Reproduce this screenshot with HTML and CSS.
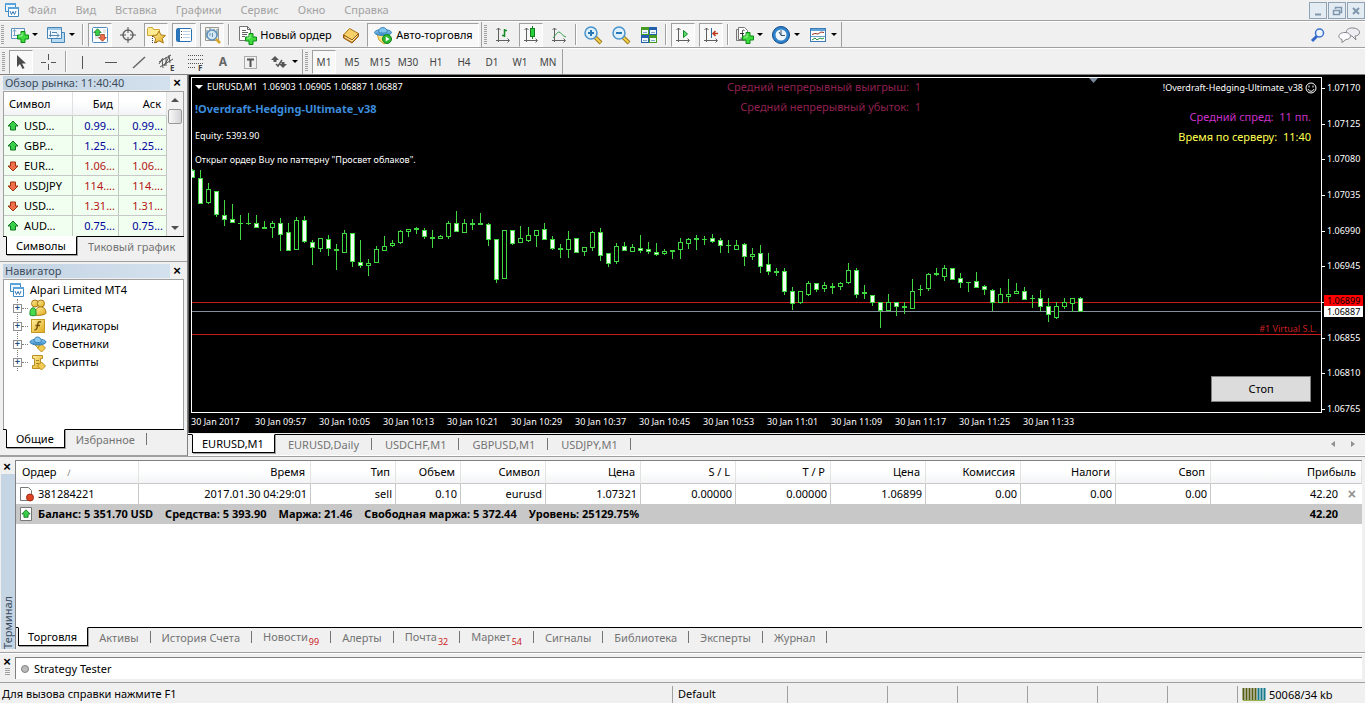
FILE: index.html
```html
<!DOCTYPE html>
<html lang="ru">
<head>
<meta charset="utf-8">
<title>EURUSD,M1</title>
<link rel="stylesheet" href="styles.css">
</head>
<body>
<svg class="defs" aria-hidden="true">
  <defs>
    <linearGradient id="gold" x1="0" y1="0" x2="1" y2="1"><stop offset="0" stop-color="#fff0a0"/><stop offset="1" stop-color="#dfa91c"/></linearGradient>
    <linearGradient id="sky" x1="0" y1="0" x2="0" y2="1"><stop offset="0" stop-color="#9fd2f5"/><stop offset="1" stop-color="#2f86c6"/></linearGradient>
    <symbol id="windows" viewBox="0 0 16 16"><path d="M1.500 1.500h10v8h-10z" fill="#eaf6ff" stroke="#3f8ac4"/><path d="M1 1h11v2H1z" fill="#5ba3d8"/><path d="M4.500 5.500h10v9h-10z" fill="#fff" stroke="#3f8ac4"/><path d="M4 5h11v2H4z" fill="#5ba3d8"/><path d="M6 9l1.500 3.500L9 9.500l1.500 3L12 9" fill="none" stroke="#3278b4"/></symbol>
    <symbol id="plus" viewBox="0 0 12 12"><path d="M4 .5h4V4h3.500v4H8v3.500H4V8H.5V4H4z" fill="#3edb3e" stroke="#0c8a14"/><path d="M5 2v3H2" fill="none" stroke="#a5f7a0"/></symbol>
    <symbol id="up" viewBox="0 0 12 12"><path d="M6 1l5 5H8.500v4h-5V6H1z" fill="#39cf49" stroke="#137422"/></symbol>
    <symbol id="down" viewBox="0 0 12 12"><path d="M6 11l5-5H8.500V2h-5v4H1z" fill="#f0704a" stroke="#9c3110"/></symbol>
    <symbol id="axes" viewBox="0 0 20 20"><path d="M5.500 3v14M3 15.500h13M3.500 5l2-2 2 2M14.500 13.500l2 2-2 2" fill="none" stroke="#606060"/></symbol>
    <symbol id="hat" viewBox="0 0 18 18"><path d="M12.500 9l4 4-4 4-4-4z" fill="#f2cb50" stroke="#b98f24"/><path d="M5 9h6l-2 4z" fill="#f5d765" stroke="#c0921b"/><ellipse cx="9" cy="7" rx="8" ry="3" fill="url(#sky)" stroke="#3a85ba"/><path d="M5 6.500c0-6 7-6 7.500 0-2 1.500-5 1.500-7.500 0z" fill="#8bc8ef" stroke="#3a85ba"/></symbol>
  </defs>
</svg>

<header class="menubar">
  <svg class="app-icon"><use href="#windows"/></svg>
  <nav class="menu">
    <button>Файл</button><button>Вид</button><button>Вставка</button><button>Графики</button><button>Сервис</button><button>Окно</button><button>Справка</button>
  </nav>
  <div class="window-buttons">
    <button aria-label="Свернуть"><svg viewBox="0 0 16 16"><path d="M5 11.500h6" stroke="#7f97ad" stroke-width="2"/></svg></button>
    <button aria-label="Восстановить"><svg viewBox="0 0 16 16"><path d="M6.500 6V4.500h6v5H11M4.500 7.500h6v4h-6zM4 7.500h7" fill="none" stroke="#7f97ad" stroke-width="1.500"/></svg></button>
    <button aria-label="Закрыть"><svg viewBox="0 0 16 16"><path d="M5 5l6 6M11 5l-6 6" stroke="#7f97ad" stroke-width="2"/></svg></button>
  </div>
</header>

<div class="toolbar first">
  <div class="group">
    <i class="grip"></i>
    <button class="tool split" aria-label="Новый график"><svg viewBox="0 0 20 20"><path d="M2.500 3.500h13v10h-13z" fill="#f4faff" stroke="#5b94bf"/><path d="M5.500 5v6M4 6.500l1.500-2L7 6.500M4 10.500h5" fill="none" stroke="#7ba0bd"/><use href="#plus" x="8" y="6" width="12" height="12"/></svg><i class="caret"></i></button>
    <button class="tool split" aria-label="Профили"><svg viewBox="0 0 20 20"><path d="M5.500 7.500h13v10h-13z" fill="#b8daf2" stroke="#4684b5"/><path d="M1.500 2.500h14v11h-14z" fill="#eef7ff" stroke="#4684b5"/><path d="M2 3h13v2H2z" fill="#9cc9ea"/><path d="M4.500 6v6M3 10.500h10M11 8.500l2 2-2 2M6 7.500h5" fill="none" stroke="#5787ac"/></svg><i class="caret"></i></button>
    <i class="sep"></i>
    <button class="tool on" aria-label="Обзор рынка"><svg viewBox="0 0 20 20"><rect x="2.500" y="2.500" width="15" height="15" rx="1" fill="#fff" stroke="#4b8cc4"/><path d="M5 11h4M5 13h4M13 5h3M13 7h3" stroke="#ccc"/><use href="#up" x="3" y="3" width="9" height="9"/><use href="#down" x="8" y="8" width="9" height="9"/></svg></button>
    <button class="tool" aria-label="Окно данных"><svg viewBox="0 0 20 20"><circle cx="10" cy="10" r="5" fill="none" stroke="#686868" stroke-width="1.500"/><path d="M10 2v6M10 12v6M2 10h6M12 10h6" stroke="#555"/></svg></button>
    <button class="tool on" aria-label="Навигатор"><svg viewBox="0 0 20 20"><path d="M1.500 3.500l1-1h4l1 2h6v6h-12z" fill="#ffec94" stroke="#d2a632"/><path d="M6.500 11v8M8 17.500h3" stroke="#444" stroke-dasharray="1 1"/><path d="M13 6l2 4 4.500.5-3.200 3 1 4.500L13 15.800 8.800 18l.9-4.500-3.200-3L11 10z" fill="url(#gold)" stroke="#ad7b14"/></svg></button>
    <button class="tool on" aria-label="Терминал"><svg viewBox="0 0 20 20"><rect x="2.500" y="3.500" width="15" height="13" rx="1" fill="#fff" stroke="#2670b5"/><path d="M3 4h3v12H3z" fill="#2b75bb"/><path d="M7.500 6v1M7.500 9v1M7.500 12v1" stroke="#444"/><path d="M9 6.500h7M9 9.500h7M9 12.500h7" stroke="#bcd1e5"/></svg></button>
    <button class="tool on" aria-label="Тестер стратегий"><svg viewBox="0 0 20 20"><path d="M3.500 2.500h13v13h-13z" fill="#f0f0ea" stroke="#9a9a90"/><path d="M5 5v8M8 3v4M12 4v4M15 4v7" stroke="#5f86a8"/><circle cx="10" cy="10" r="5" fill="#cfe6f8" fill-opacity=".85" stroke="#5e8fb8" stroke-width="1.500"/><path d="M8 11V8M10.500 12V8" stroke="#6e94b4"/><path d="M14 14l4 4" stroke="#d9a62c" stroke-width="2.500"/></svg></button>
    <i class="sep"></i>
    <button class="tool order"><svg viewBox="0 0 20 20"><path d="M2.500 1.500h8l3 3v11h-11z" fill="#fff" stroke="#777"/><path d="M10.500 1.500v3h3M5 5.500h4M5 7.500h6M5 9.500h5M5 11.500h3" fill="none" stroke="#666"/><use href="#plus" x="8" y="8" width="12" height="12"/></svg>Новый ордер</button>
    <button class="tool" aria-label="MetaEditor"><svg viewBox="0 0 20 20"><path d="M2.500 10l6-6.500 9 5-6.500 6.500z" fill="#f7d068" stroke="#a96f18"/><path d="M2.500 10v3l8.500 5 6.500-6.500v-3L11 15z" fill="#d89228" stroke="#915a12"/><path d="M4 12l7 4 5.500-5.500" fill="none" stroke="#fff0c0"/></svg></button>
    <button class="tool auto on"><svg viewBox="0 0 20 20"><path d="M4 9h11l2 5-6 5-5-4z" fill="#f9e07b" stroke="#caa02b"/><ellipse cx="10" cy="7.500" rx="8.500" ry="3" fill="url(#sky)" stroke="#3a85ba"/><path d="M5.500 7c0-6 8.500-6 9 0-2.500 1.500-6.500 1.500-9 0z" fill="#80c5ee" stroke="#3a85ba"/><circle cx="14" cy="14" r="4.500" fill="#2db92f" stroke="#12851a"/><path d="M12.800 11.500v5l3.700-2.500z" fill="#fff"/></svg>Авто-торговля</button>
  </div>
  <div class="group">
    <i class="grip"></i>
    <button class="tool" aria-label="Бары"><svg viewBox="0 0 20 20"><use href="#axes" width="20" height="20"/><path d="M11.500 4v8M9 10.500h2M12 5.500h2" stroke="#158a24" stroke-width="1.500"/></svg></button>
    <button class="tool on" aria-label="Свечи"><svg viewBox="0 0 20 20"><use href="#axes" width="20" height="20"/><path d="M11.500 1v13" stroke="#157d20"/><rect x="9.500" y="3.500" width="4" height="8" fill="#27cf3b" stroke="#157d20"/></svg></button>
    <button class="tool" aria-label="Линия"><svg viewBox="0 0 20 20"><use href="#axes" width="20" height="20"/><path d="M4 13c2-2 4-6 6-6s3 4 7 5" fill="none" stroke="#2e9a46"/></svg></button>
    <i class="sep"></i>
    <button class="tool" aria-label="Увеличить"><svg viewBox="0 0 20 20"><path d="M12 12l6 6" stroke="#9c7a1c" stroke-width="4"/><path d="M12 12l5.500 5.500" stroke="#f4d04c" stroke-width="2"/><circle cx="8" cy="8" r="6" fill="#dff0fd" stroke="#4a93cc" stroke-width="1.500"/><path d="M5 8h6M8 5v6" stroke="#2878b5" stroke-width="2"/></svg></button>
    <button class="tool" aria-label="Уменьшить"><svg viewBox="0 0 20 20"><path d="M12 12l6 6" stroke="#9c7a1c" stroke-width="4"/><path d="M12 12l5.500 5.500" stroke="#f4d04c" stroke-width="2"/><circle cx="8" cy="8" r="6" fill="#dff0fd" stroke="#4a93cc" stroke-width="1.500"/><path d="M5 8h6" stroke="#2878b5" stroke-width="2"/></svg></button>
    <button class="tool" aria-label="Окна плиткой"><svg viewBox="0 0 20 20"><path d="M2 2h8v8H2zM10 10h8v8h-8z" fill="#469b20"/><path d="M10 2h8v8h-8zM2 10h8v8H2z" fill="#245fae"/><path d="M3 5h6v4H3zM11 5h6v4h-6zM3 13h6v4H3zM11 13h6v4h-6z" fill="#eef8ff"/><path d="M4 7.500h4M12 7.500h4M4 15.500h4M12 15.500h4" stroke="#7aa6c8"/></svg></button>
    <i class="sep"></i>
    <button class="tool on" aria-label="Автопрокрутка"><svg viewBox="0 0 20 20"><use href="#axes" width="20" height="20"/><path d="M10.500 5.500v7l4-3.500z" fill="#5ade6a" stroke="#12862a"/></svg></button>
    <button class="tool on" aria-label="Сдвиг графика"><svg viewBox="0 0 20 20"><use href="#axes" width="20" height="20"/><path d="M10.500 3v10" stroke="#2b6d9d"/><path d="M12 8.500h5M14.500 6l-2.500 2.500 2.500 2.500" fill="none" stroke="#bc3a16" stroke-width="1.500"/></svg></button>
    <i class="sep"></i>
    <button class="tool split" aria-label="Индикаторы"><svg viewBox="0 0 20 20"><path d="M2.500 4.500h8v11h-8z" fill="#e9e9e9" stroke="#777"/><path d="M4.500 2.500h6l3 3v9h-9z" fill="#fff" stroke="#777"/><path d="M10.500 5.500c-2-1-2 0-2 2v4c0 2-1 2-2 1.500M6 8.500h4" fill="none" stroke="#333"/><use href="#plus" x="8" y="7" width="12" height="12"/></svg><i class="caret"></i></button>
    <button class="tool split" aria-label="Периоды"><svg viewBox="0 0 20 20"><circle cx="10" cy="10" r="7" fill="#eef6fc" stroke="#2f82cc" stroke-width="3"/><circle cx="10" cy="10" r="8.500" fill="none" stroke="#124d8a"/><path d="M10 5v5.500h4M10 10l-2-3" fill="none" stroke="#35526b"/></svg><i class="caret"></i></button>
    <button class="tool split" aria-label="Шаблоны"><svg viewBox="0 0 20 20"><rect x="2.500" y="3.500" width="15" height="13" fill="#fff" stroke="#3b7cb7"/><path d="M3 4h14v2H3z" fill="#62a3d8"/><path d="M3 11.500h14" stroke="#6ba3cd"/><path d="M4 9.500l3-1 3 .5 3-2 3 .5" fill="none" stroke="#963322"/><path d="M4 15l3-2 2 2 3-2 2 1 2-1" fill="none" stroke="#209038"/></svg><i class="caret"></i></button>
  </div>
  <div class="toolbar-end">
    <button class="tool" aria-label="Поиск"><svg viewBox="0 0 20 20"><path d="M9 11l-5 5" stroke="#3268c7" stroke-width="3"/><circle cx="11.500" cy="8" r="4" fill="#edf5ff" stroke="#3b70cc" stroke-width="1.500"/></svg></button>
    <button class="tool chat" aria-label="Сообщения"><svg viewBox="0 0 24 20"><path d="M15 3c10 0 9 8 3 8l1 4-4-4C8 11 7 3 15 3z" fill="#ededf2" stroke="#85858d"/><path d="M8 7.500c7 0 7 7 1 7l-4 3v-3C0 13 1 7.500 8 7.500z" fill="#fbfbfd" stroke="#85858d"/></svg></button>
  </div>
</div>

<div class="toolbar second">
  <div class="group">
    <i class="grip"></i>
    <button class="tool on" aria-label="Курсор"><svg viewBox="0 0 20 20"><path d="M6 3v12l3-3 2.500 5 2-1-2.500-4.500h4z" fill="#4b4b4b"/></svg></button>
    <button class="tool" aria-label="Перекрестие"><svg viewBox="0 0 20 20"><path d="M9.500 2v6M9.500 12v6M2 10.500h5M12 10.500h5" stroke="#555"/></svg></button>
    <i class="sep"></i>
    <button class="tool" aria-label="Вертикальная линия"><svg viewBox="0 0 20 20"><path d="M9.500 4v13" stroke="#555"/></svg></button>
    <button class="tool" aria-label="Горизонтальная линия"><svg viewBox="0 0 20 20"><path d="M4 10.500h12" stroke="#555"/></svg></button>
    <button class="tool" aria-label="Трендовая линия"><svg viewBox="0 0 20 20"><path d="M4 16L16 5" stroke="#666" stroke-width="1.500"/></svg></button>
    <button class="tool" aria-label="Канал"><svg viewBox="0 0 20 20"><path d="M2 10L14 3M3 15l13-8M5 7l1 9M9 5v9M12 3l1 8M2 12l4-6M7 14l5-9" stroke="#555"/><text class="glyph" x="13" y="19">E</text></svg></button>
    <button class="tool" aria-label="Фибоначчи"><svg viewBox="0 0 20 20"><path d="M3 3.500h15M3 7.500h15M3 11.500h15M3 15.500h8" stroke="#555" stroke-dasharray="1 1"/><text class="glyph" x="13" y="19">F</text></svg></button>
    <button class="tool letter">A</button>
    <button class="tool" aria-label="Метка"><svg viewBox="0 0 20 20"><rect x="3.500" y="4.500" width="12" height="12" fill="none" stroke="#666" stroke-dasharray="1 1"/><path d="M6 7.500h7M9.500 8v7" stroke="#555" stroke-width="2"/></svg></button>
    <button class="tool split" aria-label="Стрелки"><svg viewBox="0 0 20 20"><path d="M6 4l4 4H7.500v2h-3V8H2zM14 16l-4-4h2.500v-2h3v2H18z" fill="#555"/><path d="M7 12l2 2 4-6" fill="none" stroke="#555" stroke-width="1.500"/></svg><i class="caret"></i></button>
  </div>
  <div class="group periods">
    <i class="grip"></i>
    <button class="tool on">M1</button><button class="tool">M5</button><button class="tool">M15</button><button class="tool">M30</button><button class="tool">H1</button><button class="tool">H4</button><button class="tool">D1</button><button class="tool">W1</button><button class="tool">MN</button>
  </div>
</div>

<main class="workspace">
  <aside class="side">
    <section class="panel">
      <header class="panel-title"><h2>Обзор рынка: 11:40:40</h2><button class="close" aria-label="Закрыть">×</button></header>
      <div class="quotes">
        <table>
          <colgroup><col class="q-name"><col class="q-bid"><col></colgroup>
          <thead><tr><th>Символ</th><th>Бид</th><th>Аск</th></tr></thead>
          <tbody>
            <tr class="rise"><td><svg><use href="#up"/></svg>USD...</td><td>0.99...</td><td>0.99...</td></tr>
            <tr class="rise"><td><svg><use href="#up"/></svg>GBP...</td><td>1.25...</td><td>1.25...</td></tr>
            <tr class="fall"><td><svg><use href="#down"/></svg>EUR...</td><td>1.06...</td><td>1.06...</td></tr>
            <tr class="fall"><td><svg><use href="#down"/></svg>USDJPY</td><td>114....</td><td>114....</td></tr>
            <tr class="fall"><td><svg><use href="#down"/></svg>USD...</td><td>1.31...</td><td>1.31...</td></tr>
            <tr class="rise"><td><svg><use href="#up"/></svg>AUD...</td><td>0.75...</td><td>0.75...</td></tr>
          </tbody>
        </table>
        <div class="scrollbar"><i class="arrow-up"></i><i class="thumb"></i><i class="arrow-down"></i></div>
      </div>
      <div class="tabs"><button class="active">Символы</button><button class="last">Тиковый график</button></div>
    </section>
    <section class="panel navigator">
      <header class="panel-title"><h2>Навигатор</h2><button class="close" aria-label="Закрыть">×</button></header>
      <div class="tree">
        <div class="root"><svg><use href="#windows"/></svg>Alpari Limited MT4</div>
        <ul>
          <li><button aria-label="Развернуть">+</button><svg viewBox="0 0 18 18"><circle cx="6" cy="4.500" r="3.500" fill="url(#gold)" stroke="#a87812"/><circle cx="12" cy="4.500" r="3.500" fill="url(#gold)" stroke="#a87812"/><path d="M6 16c-1-10 11-11 11-2 0 2-9 3-11 2z" fill="url(#gold)" stroke="#a87812"/><path d="M1 16c-1-9 6-9 6-3v3c-1 1-5 1-6 0z" fill="#4bd84e" stroke="#15902a"/></svg>Счета</li>
          <li><button aria-label="Развернуть">+</button><svg viewBox="0 0 18 18"><rect x="2.500" y="2.500" width="13" height="13" fill="url(#gold)" stroke="#c39923"/><path d="M12 5c-3-1-3 1-3.500 4s-1 4-3 4M6.500 8.500H11" fill="none" stroke="#755208" stroke-width="1.500"/></svg>Индикаторы</li>
          <li><button aria-label="Развернуть">+</button><svg><use href="#hat"/></svg>Советники</li>
          <li><button aria-label="Развернуть">+</button><svg viewBox="0 0 18 18"><path d="M3.500 2.500h10v3h-2v7h2l-2 3h-8v-3h2v-7h-2z" fill="url(#gold)" stroke="#b98f24"/><path d="M7 7.500h3M7 10.500h3" stroke="#a5801f"/><path d="M12.500 9l4 4-4 4-4-4z" fill="#f2cb50" stroke="#b98f24"/></svg>Скрипты</li>
        </ul>
      </div>
      <div class="tabs"><button class="active">Общие</button><button>Избранное</button></div>
    </section>
  </aside>

  <section class="chart-area">
    <div class="chart">
      <div class="plot">
        <svg class="candles" id="candles" aria-label="EURUSD M1">
          <path d="M897 0h9l-4.500 5z" fill="#78869a"/>
          <line x1="0" x2="100%" y1="224.500" y2="224.500" stroke="#c81a1a"/>
          <line x1="0" x2="100%" y1="233.500" y2="233.500" stroke="#84909c"/>
          <line x1="0" x2="100%" y1="256.500" y2="256.500" stroke="#c81a1a"/>
        </svg>
        <div class="info">
          <p><i class="drop"></i>EURUSD,M1&nbsp; 1.06903 1.06905 1.06887 1.06887</p>
          <h1>!Overdraft-Hedging-Ultimate_v38</h1>
          <p>Equity: 5393.90</p>
          <p>Открыт ордер Buy по паттерну "Просвет облаков".</p>
        </div>
        <div class="averages"><p>Средний непрерывный выигрыш:&nbsp; 1</p><p>Средний непрерывный убыток:&nbsp; 1</p></div>
        <div class="expert">
          <p class="name">!Overdraft-Hedging-Ultimate_v38 <svg viewBox="0 0 12 12"><circle cx="6" cy="6" r="5" fill="none" stroke="#fff"/><path d="M4 3.500v2M8 3.500v2M3 7c1 3 5 3 6 0" fill="none" stroke="#fff"/></svg></p>
          <p class="spread">Средний спред:&nbsp; 11 пп.</p>
          <p class="time">Время по серверу:&nbsp; 11:40</p>
        </div>
        <span class="stop-label">#1 Virtual S.L.</span>
        <button class="stop">Стоп</button>
      </div>
      <div class="prices">
        <span>1.07170</span><span>1.07125</span><span>1.07080</span><span>1.07035</span><span>1.06990</span><span>1.06945</span><span class="covered"></span><span>1.06855</span><span>1.06810</span><span>1.06765</span>
        <b class="ask">1.06899</b><b class="bid">1.06887</b>
      </div>
      <div class="times">
        <span>30 Jan 2017</span><span>30 Jan 09:57</span><span>30 Jan 10:05</span><span>30 Jan 10:13</span><span>30 Jan 10:21</span><span>30 Jan 10:29</span><span>30 Jan 10:37</span><span>30 Jan 10:45</span><span>30 Jan 10:53</span><span>30 Jan 11:01</span><span>30 Jan 11:09</span><span>30 Jan 11:17</span><span>30 Jan 11:25</span><span>30 Jan 11:33</span>
      </div>
    </div>
    <div class="tabs chart-tabs"><button class="active">EURUSD,M1</button><button>EURUSD,Daily</button><button>USDCHF,M1</button><button>GBPUSD,M1</button><button>USDJPY,M1</button><span class="pager"><i class="left"></i><i class="right"></i></span></div>
  </section>
</main>

<section class="terminal">
  <div class="dock"><button class="close" aria-label="Закрыть">×</button><h2>Терминал</h2></div>
  <div class="terminal-body">
    <table class="orders">
      <colgroup><col class="w-order"><col class="w-time"><col class="w-type"><col class="w-lots"><col class="w-type"><col class="w-price"><col class="w-price"><col class="w-price"><col class="w-price"><col class="w-price"><col class="w-price"><col class="w-price"><col></colgroup>
      <thead><tr><th>Ордер <i class="sort">∕</i></th><th>Время</th><th>Тип</th><th>Объем</th><th>Символ</th><th>Цена</th><th>S / L</th><th>T / P</th><th>Цена</th><th>Комиссия</th><th>Налоги</th><th>Своп</th><th>Прибыль</th></tr></thead>
      <tbody>
        <tr><td><div class="line"><svg viewBox="0 0 16 16"><path d="M1.500 1.500h8l3 3v10h-11z" fill="#fff" stroke="#777"/><circle cx="11" cy="11.500" r="3.500" fill="#dd4522" stroke="#a52a12"/></svg>381284221</div></td><td>2017.01.30 04:29:01</td><td>sell</td><td>0.10</td><td>eurusd</td><td>1.07321</td><td>0.00000</td><td>0.00000</td><td>1.06899</td><td>0.00</td><td>0.00</td><td>0.00</td><td>42.20<button class="row-close" aria-label="Закрыть ордер">×</button></td></tr>
        <tr class="total"><td colspan="12"><div class="line"><svg viewBox="0 0 16 16"><path d="M1.500 1.500h11v13h-11z" fill="#fff" stroke="#777"/><use href="#up" x="2" y="3" width="10" height="10"/></svg><div class="sums"><span>Баланс: 5 351.70 USD</span><span>Средства: 5 393.90</span><span>Маржа: 21.46</span><span>Свободная маржа: 5 372.44</span><span>Уровень: 25129.75%</span></div></div></td><td>42.20</td></tr>
      </tbody>
    </table>
    <div class="tabs"><button class="active">Торговля</button><button>Активы</button><button>История Счета</button><button>Новости<sub>99</sub></button><button>Алерты</button><button>Почта<sub>32</sub></button><button>Маркет<sub>54</sub></button><button>Сигналы</button><button>Библиотека</button><button>Эксперты</button><button>Журнал</button></div>
  </div>
</section>

<section class="tester">
  <div class="tester-dock"><button class="close" aria-label="Закрыть">×</button><i></i></div>
  <div class="tester-body"><i class="dot"></i>Strategy Tester</div>
</section>

<footer class="status">
  <span class="hint">Для вызова справки нажмите F1</span><span class="profile">Default</span><span class="wide"></span><span></span><span></span><span></span><span></span><span></span>
  <span class="traffic"><svg viewBox="0 0 24 13"><path d="M1.500 0v12M4.500 0v12M7.500 0v12M10.500 0v12M13.500 0v12" stroke="#555c14" stroke-width="2"/><path d="M16.500 0v12M19.500 0v12M22.500 0v12" stroke="#147a8c" stroke-width="2"/><path d="M1 12.500h22" stroke="#95b54a"/></svg>50068/34 kb</span>
</footer>
<script src="chart.js"></script>
</body>
</html>
```

FILE: styles.css
```css
* { box-sizing: border-box; }
html, body { margin: 0; }
body {
  min-height: 100vh;
  display: flex;
  flex-direction: column;
  background: #f0f0f0;
  color: #000;
  font: 11px/16px "Noto Sans", "Open Sans", sans-serif;
}
button { margin: 0; padding: 0; border: 0; background: none; color: inherit; font: inherit; }
h1, h2, p, ul { margin: 0; padding: 0; font: inherit; }
i { font-style: normal; }
svg { flex: none; display: block; }
.defs { position: absolute; width: 0; height: 0; }

/* Menu */
.menubar { display: flex; align-items: center; height: 21px; border-bottom: 1px solid #a0a0a0; padding-left: 4px; }
.app-icon { width: 16px; height: 16px; }
.menu { display: flex; gap: 19px; padding-left: 8px; color: #a2a2a2; }
.window-buttons { display: flex; margin-left: auto; }
.window-buttons button { width: 18px; height: 17px; margin-left: 1px; border: 1px solid #90a3b5; background: #e3ebf3; }

/* Toolbars */
.toolbar { display: flex; height: 27px; border-top: 1px solid #fff; border-bottom: 1px solid #a0a0a0; }
.group { display: flex; align-items: center; gap: 4px; padding: 0 1px 0 2px; border-right: 1px solid #a0a0a0; }
.first .group:first-child { padding-left: 1px; padding-right: 2px; }
.grip { width: 3px; height: 19px; background: repeating-linear-gradient(#a0a0a0 0 1px, transparent 1px 2px); }
.sep { width: 2px; height: 21px; border-left: 1px solid #a0a0a0; border-right: 1px solid #fff; }
.tool { display: flex; align-items: center; justify-content: center; width: 24px; height: 24px; white-space: nowrap; }
.tool svg { width: 20px; height: 20px; }
.tool.on { background: #f8f8f8; border: 1px solid #fff; border-top-color: #a0a0a0; border-left-color: #a0a0a0; }
.tool.split { width: 33px; justify-content: space-between; padding: 0 2px; }
.first .tool.split { padding: 0 3px 0 1px; }
.caret { border: 3px solid transparent; border-top-color: #000; border-bottom: 0; }
.tool.order { width: 101px; gap: 3px; font-size: 11px; }
.tool.auto { width: 112px; gap: 3px; font-size: 11px; }
.toolbar-end { display: flex; align-items: center; gap: 7px; margin-left: auto; padding-right: 4px; }
.chat svg { width: 24px; }
.second { border-bottom-color: #808080; }
.second .group { padding-right: 2px; }
.periods { font-size: 10px; color: #444; }
.letter { font: bold 12px/16px "Noto Sans", sans-serif; color: #666; }
.glyph { font: bold 8px "Noto Sans", sans-serif; fill: #444; }

/* Workspace */
.workspace { display: flex; min-height: 380px; }
.side { width: 188px; flex: none; display: flex; flex-direction: column; border-right: 1px solid #808080; }
.panel { display: flex; flex-direction: column; padding: 0 3px 4px; border-bottom: 1px solid #a0a0a0; margin-bottom: 1px; }
.navigator { flex: 1; margin-bottom: 0; padding-bottom: 5px; }
.panel-title { display: flex; align-items: center; justify-content: space-between; height: 16px; }
.panel-title h2 { flex: 1; height: 14px; line-height: 14px; padding-left: 2px; color: #3c4c5c; background: linear-gradient(90deg, #c4d3e1, #d3e1ef); }
.close { width: 14px; height: 14px; font: bold 13px/14px "Liberation Sans", sans-serif; text-align: center; }
.quotes { display: flex; border: 1px solid #a0a0a0; border-bottom: 0; }
.quotes table { flex: 1; min-width: 0; table-layout: fixed; border-collapse: separate; border-spacing: 0; }
.q-name { width: 69px; }
.q-bid { width: 46px; }
.quotes th { height: 24px; padding: 0 5px; font-weight: normal; text-align: right; background: linear-gradient(#fff 40%, #f2f3f5); border-right: 1px solid #e0e0e0; border-bottom: 1px solid #d0d0d0; }
.quotes th:first-child { text-align: left; }
.quotes td { height: 20px; padding: 0 3px; text-align: right; white-space: nowrap; background: #f0fff0; border-right: 1px solid #c0c8c0; border-bottom: 1px solid #c8c8c8; }
.quotes td:first-child { display: flex; align-items: center; gap: 5px; color: #000; }
.quotes tr:last-child td { border-bottom: 0; }
.quotes td svg { width: 12px; height: 12px; }
.rise { color: #00009c; }
.fall { color: #b41414; }
.scrollbar { width: 16px; display: flex; flex-direction: column; align-items: center; padding: 6px 0; background: #f2f2f2; }
.arrow-up { border: 4px solid transparent; border-top: 0; border-bottom-color: #505050; }
.arrow-down { margin-top: auto; border: 4px solid transparent; border-bottom: 0; border-top-color: #505050; }
.thumb { width: 14px; height: 15px; margin-top: 7px; border: 1px solid #999; border-radius: 2px; background: linear-gradient(90deg, #f8f8f8, #d4d4d8); }

/* Tabs shared by all panels */
.tabs { display: flex; align-items: flex-start; height: 21px; padding-left: 3px; border-top: 1px solid #000; color: #747474; white-space: nowrap; }
.tabs button { position: relative; padding: 0 12px 0 11px; height: 18px; line-height: 17px; }
.tabs button:not(.active):not(.last)::after { content: ""; position: absolute; right: 0; top: 3px; height: 12px; border-right: 1px solid #747474; }
.tabs .active { height: 19px; margin-top: -1px; padding: 0 10px 0 9px; color: #000; background: #fff; border: 1px solid #000; border-top-color: #fff; box-shadow: 1px 1px #a0a0a0; }
.tabs sub { margin-left: 1px; color: #cc2222; font-size: 9px; line-height: 9px; vertical-align: -4px; }

.tree { flex: 1; padding: 1px 5px; border: 1px solid #a0a0a0; border-bottom: 0; background: #fff; }
.root { display: flex; align-items: center; gap: 5px; height: 18px; }
.root svg { width: 16px; height: 16px; }
.tree ul { list-style: none; margin-left: 8px; border-left: 1px dotted #808080; }
.tree li { display: flex; align-items: center; height: 18px; margin-left: -5px; }
.tree li svg { width: 18px; height: 18px; margin: 0 5px 0 0; }
.tree li button { position: relative; width: 9px; height: 9px; margin-right: 7px; border: 1px solid #919191; background: #fff; color: #244d82; font: bold 9px/7px "Liberation Sans", sans-serif; }
.tree li button::after { content: ""; position: absolute; left: 8px; top: 3px; width: 6px; border-top: 1px dotted #808080; }

/* Chart */
.chart-area { flex: 1; min-width: 0; display: flex; flex-direction: column; }
.chart { flex: 1; display: grid; grid-template: 1fr 20px / 1fr 42px; padding: 2px 1px 0 2px; background: #000; color: #fff; font-size: 9px; line-height: 12px; border-left: 1px solid #555; }
.plot { position: relative; border: 1px solid #fff; }
.candles { width: 100%; height: 100%; min-height: 334px; }
.info { position: absolute; left: 3px; top: 3px; }
.info h1 { margin: 8px 0 13px; font: bold 11px/16px "Noto Sans", sans-serif; color: #3c8cdc; }
.info p + p { margin-top: 12px; }
.drop { display: inline-block; margin: 0 4px 1px 0; border: 4px solid transparent; border-top-color: #fff; border-bottom: 0; }
.averages { position: absolute; right: 400px; top: -1px; text-align: right; font-size: 11px; line-height: 20px; color: #8e2150; }
.expert { position: absolute; right: 10px; top: 3px; text-align: right; font-size: 11px; line-height: 20px; }
.expert .name { display: flex; align-items: center; gap: 2px; margin: 0 -6px 12px 0; font-size: 9px; line-height: 14px; }
.expert svg { width: 12px; height: 12px; }
.spread { color: #c832c8; }
.time { color: #ffff50; }
.stop-label { position: absolute; right: 4px; bottom: 77px; color: #c82020; }
.stop { position: absolute; right: 10px; bottom: 10px; width: 100px; height: 26px; border: 1px solid #808080; background: #dcdcdc; color: #000; font-size: 11px; line-height: 16px; }
.prices { position: relative; display: flex; flex-direction: column; justify-content: space-between; padding: 5px 0 0; margin-bottom: -2px; }
.prices span { height: 12px; padding-left: 5px; background: linear-gradient(#fff, #fff) 0 6px / 3px 1px no-repeat; }
.prices b { position: absolute; left: 2px; right: 1px; padding-left: 3px; height: 11px; line-height: 11px; font-weight: normal; color: #000; overflow: hidden; }
.ask { top: 218px; background: #f00; }
.prices .bid { top: 229px; background: #fff; }
.times { grid-column: 1 / 3; display: flex; align-items: flex-start; padding-top: 3px; overflow: hidden; }
.times span { flex: none; width: 64px; white-space: nowrap; }
.chart-tabs { height: 22px; padding: 0 10px 0 4px; margin-top: 1px; border-bottom: 1px solid #fff; }
.chart-tabs button { padding: 0 13px; }
.pager { display: flex; gap: 16px; margin: 6px 0 0 auto; }
.pager i { border: 3px solid transparent; }
.pager .left { border-left: 0; border-right: 4px solid #909090; }
.pager .right { border-right: 0; border-left: 4px solid #909090; }

/* Terminal */
.terminal { flex: 1; display: flex; min-height: 196px; padding: 3px 0; border-top: 1px solid #a0a0a0; border-bottom: 1px solid #a0a0a0; }
.dock { width: 15px; flex: none; display: flex; flex-direction: column; }
.dock h2 { flex: 1; margin-left: 1px; padding: 0 0 3px; line-height: 13px; writing-mode: vertical-rl; transform: rotate(180deg); background: #c5d5e4; color: #3c4c5c; }
.terminal-body { flex: 1; min-width: 0; display: flex; flex-direction: column; justify-content: space-between; margin-right: 3px; border-top: 1px solid #808080; border-left: 1px solid #808080; background: #fff; }
.terminal-body .tabs { background: #f0f0f0; height: 22px; padding-left: 2px; }
.orders { width: 100%; table-layout: fixed; border-collapse: separate; border-spacing: 0; }
.w-order { width: 123px; }
.w-time { width: 172px; }
.w-type { width: 85px; }
.w-lots { width: 65px; }
.w-price { width: 95px; }
.orders th { height: 23px; padding: 0 5px 0 6px; font-weight: normal; text-align: right; white-space: nowrap; background: linear-gradient(#fff 45%, #f3f4f6); border-right: 1px solid #e3e3e3; border-bottom: 1px solid #c8c8c8; }
.orders th:first-child { text-align: left; }
.orders td { height: 20px; padding: 0 3px; text-align: right; white-space: nowrap; border-right: 1px solid #c8c8c8; }
.orders td:last-child { padding-right: 24px; position: relative; border-right: 0; }
.orders td:first-child { text-align: left; }
.line { display: flex; align-items: center; gap: 3px; }
.line svg { width: 16px; height: 16px; }
.sums { display: flex; gap: 12px; }
.orders .total td { background: #c8c8c8; border: 0; font-weight: bold; }
.sort { margin-left: 8px; font-size: 9px; color: #777; }
.row-close { position: absolute; right: 6px; top: 2px; color: #909090; font: bold 14px/16px "Liberation Sans", sans-serif; }

/* Tester and status line */
.tester { display: flex; height: 30px; padding: 3px 0; border-top: 1px solid #fff; border-bottom: 1px solid #a0a0a0; }
.tester-dock { width: 15px; }
.tester-dock .close { display: block; height: 9px; line-height: 8px; }
.tester-dock i { display: block; width: 5px; height: 8px; margin: 2px 0 0 5px; background: repeating-linear-gradient(#a0a0a0 0 1px, transparent 1px 2px); }
.tester-body { flex: 1; display: flex; align-items: center; gap: 5px; margin-right: 3px; padding-left: 5px; border-top: 1px solid #808080; border-left: 1px solid #808080; background: #fff; }
.dot { width: 8px; height: 8px; border: 1px solid #808080; border-radius: 50%; background: #bbb; }
.status { display: flex; height: 20px; padding-top: 3px; align-items: center; line-height: 16px; }
.status span { width: 70px; height: 17px; padding-left: 5px; border-left: 1px solid #a0a0a0; }
.status .hint { flex: 1; padding-left: 2px; border-left: 0; }
.status .profile { width: 115px; }
.status .wide { width: 100px; }
.status .traffic { display: flex; align-items: center; gap: 3px; width: 128px; padding-left: 4px; }
.traffic svg { width: 24px; height: 13px; }
```

FILE: chart.js
```js
// Candles as [high, body top, body bottom, low, kind], 8px apart.
// Kinds: F falling (filled), H rising (hollow), S thin solid body, D dash only.
const candles = [
  [169,170,178,178,'F'],[170,178,204,204,'F'],[183,189,203,204,'H'],[191,191,215,217,'F'],[200,215,220,226,'F'],
  [204,219,223,223,'F'],[215,223,224,240,'D'],[213,223,224,225,'D'],[215,223,228,228,'F'],[221,227,229,229,'S'],
  [221,223,228,238,'H'],[218,223,235,251,'F'],[223,232,251,251,'F'],[217,220,250,250,'H'],[216,220,242,243,'F'],
  [240,242,248,265,'F'],[238,238,249,252,'H'],[235,239,249,256,'F'],[244,249,251,270,'S'],[230,233,253,253,'H'],
  [233,233,262,267,'F'],[240,262,266,268,'F'],[259,263,266,276,'H'],[246,249,263,263,'H'],[236,246,251,251,'H'],
  [240,243,246,247,'H'],[230,231,243,244,'H'],[229,229,232,237,'H'],[227,228,230,234,'S'],[228,230,237,239,'F'],
  [230,237,239,248,'S'],[235,236,239,239,'H'],[221,223,237,239,'H'],[211,223,232,232,'F'],[219,223,233,233,'H'],
  [219,223,225,230,'S'],[213,223,225,225,'S'],[223,224,240,246,'F'],[239,239,280,283,'F'],[230,230,279,279,'H'],
  [230,230,244,245,'F'],[226,238,243,243,'H'],[227,235,241,242,'H'],[230,230,236,247,'H'],[223,229,240,240,'F'],
  [236,239,249,250,'F'],[244,248,250,258,'S'],[231,239,250,258,'H'],[238,238,253,253,'F'],[247,247,252,256,'H'],
  [231,232,248,251,'H'],[228,232,256,261,'F'],[253,253,264,267,'F'],[243,246,262,264,'H'],[242,246,251,251,'F'],
  [244,247,252,252,'H'],[235,248,251,253,'F'],[242,249,252,254,'F'],[243,252,255,256,'F'],[249,251,254,255,'H'],
  [250,250,252,259,'S'],[238,242,250,259,'H'],[238,239,244,249,'H'],[235,238,240,250,'S'],[236,239,240,245,'D'],
  [234,238,242,243,'F'],[238,240,246,253,'F'],[240,245,246,253,'D'],[240,245,250,250,'H'],[243,244,257,266,'F'],
  [248,254,257,260,'H'],[245,253,267,273,'F'],[253,264,272,275,'F'],[268,271,273,276,'S'],[268,271,292,295,'F'],
  [287,291,304,310,'F'],[291,291,303,304,'H'],[281,283,295,296,'H'],[283,283,290,292,'F'],[282,285,289,292,'H'],
  [283,286,288,294,'S'],[282,283,287,290,'H'],[263,270,283,284,'H'],[268,270,295,298,'F'],[285,292,294,299,'F'],
  [295,295,303,306,'F'],[302,302,311,328,'F'],[294,302,311,311,'H'],[302,302,307,316,'F'],[302,306,308,314,'S'],
  [279,291,309,309,'H'],[285,289,290,296,'D'],[273,274,289,291,'H'],[268,273,275,276,'S'],[265,268,277,281,'H'],
  [268,268,280,280,'F'],[273,278,283,288,'F'],[282,282,283,292,'D'],[272,281,288,288,'F'],[285,286,290,295,'F'],
  [289,290,303,311,'F'],[288,294,303,303,'H'],[279,294,297,303,'H'],[283,291,294,294,'H'],[287,291,300,300,'F'],
  [295,298,299,308,'D'],[290,298,307,311,'F'],[298,306,315,322,'F'],[302,306,318,319,'H'],[298,302,307,309,'H'],
  [298,298,304,312,'H'],[297,298,312,312,'F']
];

const NS = 'http://www.w3.org/2000/svg';
const TOP = 78;
const GREEN = '#40d840';
const svg = document.getElementById('candles');

function rect(x, y, width, height, fill) {
  const node = document.createElementNS(NS, 'rect');
  Object.entries({ x, y, width, height, fill }).forEach(([k, v]) => node.setAttribute(k, v));
  svg.appendChild(node);
}

candles.forEach(([high, top, bottom, low, kind], i) => {
  const x = i * 8;
  rect(x, high - TOP, 1, low - high, GREEN);
  rect(x - 2, top - TOP, 5, bottom - top, GREEN);
  if (kind === 'F') rect(x - 1, top - TOP + 1, 3, bottom - top - 2, '#f4fff4');
  if (kind === 'H') rect(x - 1, top - TOP + 1, 3, bottom - top - 2, '#000');
});
```
